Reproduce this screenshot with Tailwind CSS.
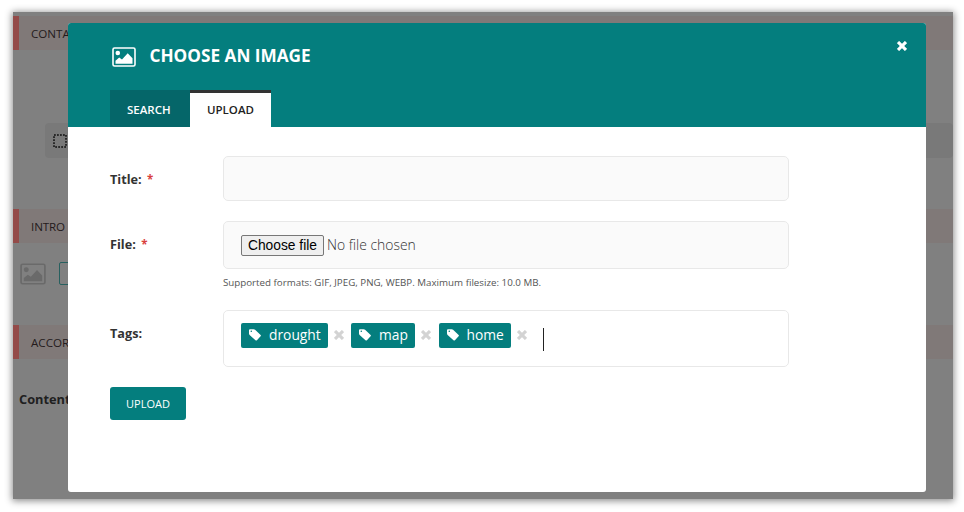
<!DOCTYPE html>
<html lang="en">
<head>
<meta charset="utf-8">
<title>Choose an image</title>
<script src="https://cdn.jsdelivr.net/npm/@tailwindcss/browser@4"></script>
</head>
<body class="bg-white w-[964px] h-[512px] overflow-hidden font-['Open_Sans',sans-serif]">
<svg class="hidden">
  <symbol id="picture" viewBox="0 0 24 20"><rect x="1" y="1" width="22" height="18" rx="1.5" fill="none" stroke="currentColor" stroke-width="1.6"/><circle cx="5.800" cy="6" r="2.300" fill="currentColor"/><path d="M3.500 16.800v-3l3.700-3.200 2.800 2 5.700-6.300 4.800 5v5.500z" fill="currentColor"/></symbol>
  <symbol id="tag" viewBox="0 0 12 12"><path fill="currentColor" fill-rule="evenodd" d="M0 1.200Q0 .2 1 .2h3.700q.8 0 1.400.6l5.500 5.100q.7.7 0 1.400l-3.700 4q-.7.6-1.400 0L.6 5.900Q0 5.300 0 4.500zM2.300 1.500a.8.8 0 1 0 0 1.600.8.8 0 0 0 0-1.600z"/></symbol>
  <symbol id="cross" viewBox="0 0 10 10"><path d="M2.100 2.100l5.800 5.800M7.900 2.100l-5.800 5.800" stroke="currentColor" stroke-width="3.100" stroke-linecap="square"/></symbol>
</svg>
<div class="relative ml-[12.500px] mt-[12px] w-[940px] h-[487px] bg-[#808080] shadow-[0_1px_7px_1px_rgba(0,0,0,0.450)]">
  <main class="flex flex-col pt-[4px] text-[11.600px] text-[#241b1c]">
    <div class="h-[34px] shrink-0 border-l-[6px] border-[#944b49] bg-[#807978] pl-[12.500px] leading-[36px]">CONTACT</div>
    <div class="mt-[73px] ml-[32px] flex h-[35px] items-center rounded bg-[#797979] pl-2">
      <svg class="size-[14px]" viewBox="0 0 14 14"><rect x="1" y="1" width="12" height="12" fill="none" stroke="#111" stroke-width="1.500" stroke-dasharray="1.800 1.200"/></svg>
    </div>
    <div class="mt-[51px] h-[34px] shrink-0 border-l-[6px] border-[#944b49] bg-[#807978] pl-[12.500px] leading-[36px] tracking-[-0.100px]">INTRO SECTION</div>
    <div class="mt-[20px] flex h-[22px] pl-[7.500px] text-[#6a6a6a]">
      <svg class="h-[22px] w-[26px]" preserveAspectRatio="none"><use href="#picture"/></svg>
      <span class="-mt-[1px] ml-[13px] h-[23px] w-[100px] rounded-[2px] border border-[#27605f]"></span>
    </div>
    <div class="mt-[40px] h-[34px] shrink-0 border-l-[6px] border-[#944b49] bg-[#807978] pl-[12.500px] leading-[36px]">ACCORDION</div>
    <div class="mt-[30px] pl-[6.500px] text-[12.800px] leading-[20px] font-bold text-[#202020]">Content</div>
  </main>

  <section class="absolute left-[55.500px] top-[11px] flex h-[469px] w-[858px] flex-col overflow-hidden rounded-[3px] bg-white">
    <header class="flex h-[104px] shrink-0 flex-col justify-between bg-[#047e7e]">
      <div class="flex items-start justify-between pl-[43.500px] pr-[19px] text-white">
        <div class="flex items-center pt-[20px]">
          <svg class="mt-[2px] h-[20px] w-[24px]" viewBox="0 0 24 20"><use href="#picture" width="24" height="20"/></svg>
          <h1 class="ml-[14px] text-[17.200px] leading-[26px] font-bold whitespace-nowrap">CHOOSE AN IMAGE</h1>
        </div>
        <svg class="mt-[18px] size-[10px]"><use href="#cross"/></svg>
      </div>
      <nav class="flex pl-[42px] text-[11.500px] font-semibold">
        <a class="h-[37px] w-[80px] bg-[#056669] pl-[17px] leading-[39px] text-white">SEARCH</a>
        <a class="h-[37px] w-[81px] border-t-[3px] border-[#333] bg-white pl-[17px] leading-[33px] text-[#222]">UPLOAD</a>
      </nav>
    </header>
    <form class="pl-[42px] pt-[29px] text-[#333]">
      <div class="flex">
        <label class="w-[113px] pt-[13px] text-[12.700px] leading-[20px] font-bold">Title: <span class="ml-[2px] text-[11.500px] text-[#d9403d]">*</span></label>
        <div class="h-[45px] w-[566px] rounded-[5px] border border-[#e8e8e8] bg-[#fafafa]"></div>
      </div>
      <div class="mt-[20px] flex">
        <label class="w-[113px] pt-[13px] text-[12.700px] leading-[20px] font-bold">File: <span class="ml-[2px] text-[11.500px] text-[#d9403d]">*</span></label>
        <div>
          <div class="flex h-[48px] w-[566px] items-center rounded-[5px] border border-[#e8e8e8] bg-[#fafafa] pl-[17px]">
            <span class="h-[21px] w-[83px] rounded-[2px] border border-[#777] bg-[#efefef] text-center font-['Liberation_Sans',sans-serif] text-[13.800px] leading-[19px] whitespace-nowrap text-black">Choose file</span>
            <span class="ml-[3px] text-[13.900px] leading-[20px] font-light">No file chosen</span>
          </div>
          <p class="mt-[6px] text-[9.750px] leading-[15px] whitespace-nowrap text-[#555]">Supported formats: GIF, JPEG, PNG, WEBP. Maximum filesize: 10.0 MB.</p>
        </div>
      </div>
      <div class="mt-[20px] flex">
        <label class="w-[113px] pt-[13px] text-[12.700px] leading-[20px] font-bold">Tags:</label>
        <div class="flex h-[57px] w-[566px] rounded-[5px] border border-[#e8e8e8] bg-white pl-[17px] pt-[12px] text-[13.800px] leading-[24px] text-[#d3d3d3]">
          <span class="flex h-[25px] w-[87px] rounded-[2px] bg-[#047e7e] pl-[8px] text-white"><svg class="mt-[5.500px] mr-[8px] size-[12px]"><use href="#tag"/></svg>drought</span>
          <svg class="mt-[7px] ml-[6px] mr-[7px] size-[10px]"><use href="#cross"/></svg>
          <span class="flex h-[25px] w-[64px] rounded-[2px] bg-[#047e7e] pl-[8px] text-white"><svg class="mt-[5.500px] mr-[8px] size-[12px]"><use href="#tag"/></svg>map</span>
          <svg class="mt-[7px] ml-[6px] mr-[7.500px] size-[10px]"><use href="#cross"/></svg>
          <span class="flex h-[25px] w-[72.500px] rounded-[2px] bg-[#047e7e] pl-[8px] text-white"><svg class="mt-[5.500px] mr-[8px] size-[12px]"><use href="#tag"/></svg>home</span>
          <svg class="mt-[7px] ml-[6px] size-[10px]"><use href="#cross"/></svg>
          <span class="mt-[5px] ml-[16px] h-[23px] w-px bg-[#222]"></span>
        </div>
      </div>
      <button type="button" class="mt-[20px] block h-[33px] w-[76px] rounded-[3px] bg-[#047e7e] pt-[2px] text-[11px] text-white">UPLOAD</button>
    </form>
  </section>
</div>
</body>
</html>
